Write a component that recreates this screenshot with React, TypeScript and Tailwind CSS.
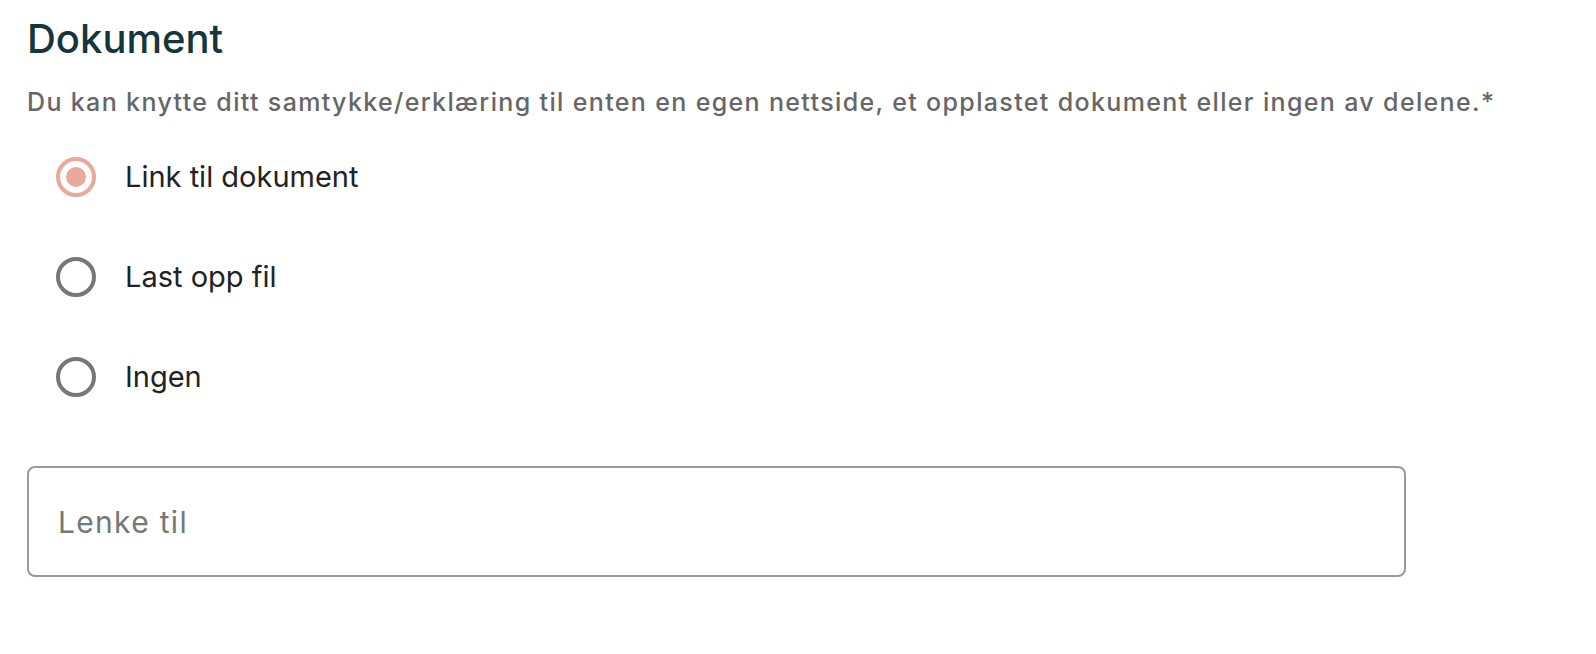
import React, { useState } from 'react'

const options = [
  { id: 'link', label: 'Link til dokument' },
  { id: 'upload', label: 'Last opp fil' },
  { id: 'none', label: 'Ingen' },
]

export default function App() {
  const [selected, setSelected] = useState('link')
  const [url, setUrl] = useState('')

  return (
    <div className="min-h-screen bg-white px-[27px] pt-[15px] font-['Inter','Noto_Sans',sans-serif]">
      <h2 className="text-[40px] leading-[48px] font-medium text-[#16363b]">Dokument</h2>
      <p className="mt-[25px] text-[25px] leading-[28px] font-medium tracking-[1.35px] text-[#666666]">
        Du kan knytte ditt samtykke/erklæring til enten en egen nettside, et opplastet dokument eller ingen av delene.*
      </p>

      {/* valg */}
      <div className="mt-[41px] flex flex-col gap-[60px] pl-[29px]">
        {options.map((opt) => {
          const active = selected === opt.id
          return (
            <label key={opt.id} className="flex items-center gap-[29px] cursor-pointer">
              <input
                type="radio"
                name="doc"
                className="sr-only"
                checked={active}
                onChange={() => setSelected(opt.id)}
              />
              <span
                className={
                  active
                    ? 'flex h-[40px] w-[40px] items-center justify-center rounded-full border-[4px] border-[#e8aa9b]'
                    : 'flex h-[40px] w-[40px] items-center justify-center rounded-full border-[4px] border-[#777777]'
                }
              >
                {active && <span className="h-[20px] w-[20px] rounded-full bg-[#e8aa9b]" />}
              </span>
              <span className="text-[29px] leading-[40px] text-[#222222]">{opt.label}</span>
            </label>
          )
        })}
      </div>

      <input
        type="text"
        value={url}
        onChange={(e) => setUrl(e.target.value)}
        placeholder="Lenke til"
        className="mt-[69px] block h-[111px] w-[1379px] rounded-[8px] border-2 border-[#9a9a9a] px-[29px] text-[30px] tracking-[1.3px] text-[#222222] placeholder:text-[#777777] outline-none"
      />
    </div>
  )
}
